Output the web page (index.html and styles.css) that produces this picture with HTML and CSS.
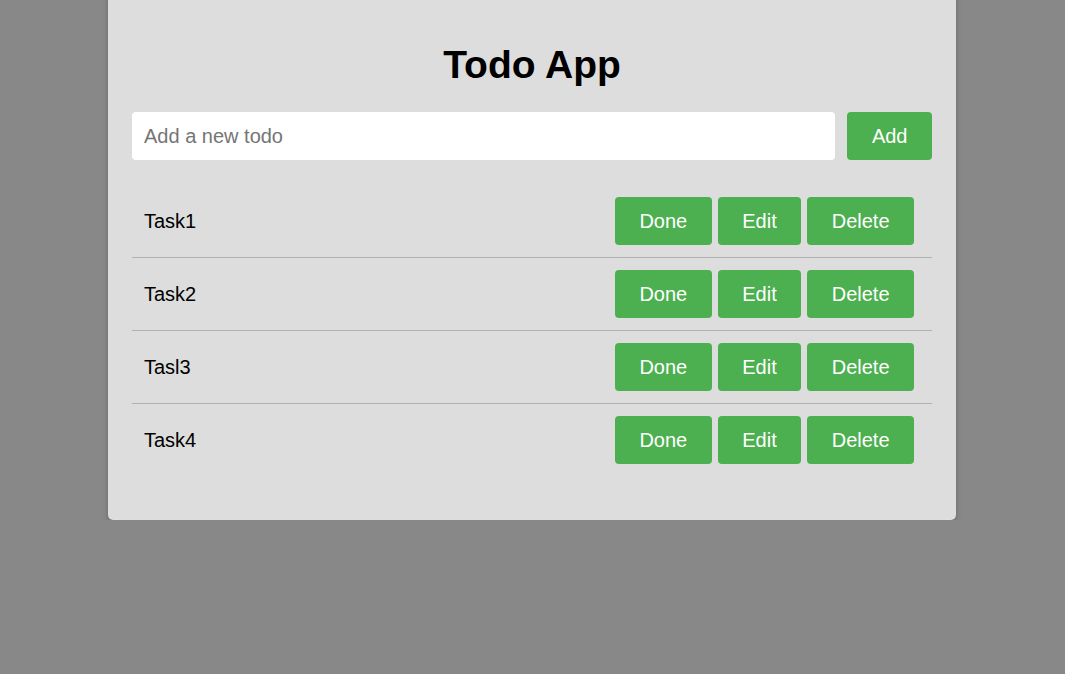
FILE: index.html
```html
<!DOCTYPE html>
<html lang="en">
<head>
  <meta charset="UTF-8">
  <meta name="viewport" content="width=device-width, initial-scale=1.0">
  <title>Todo App</title>
  <link rel="stylesheet" href="styles.css">
</head>
<body>
  <div class="container">
    <h1>Todo App</h1>
    <form class="todo-form">
      <input type="text" class="todo-input" placeholder="Add a new todo">
      <button type="submit" class="btn">Add</button>
    </form>
    <ul class="todo-list">
      <li class="todo-item">
        <span class="todo-text">Task1</span>
        <div class="actions">
          <button class="btn">Done</button>
          <button class="btn">Edit</button>
          <button class="btn">Delete</button>
        </div>
      </li>
      <li class="todo-item">
        <span class="todo-text">Task2</span>
        <div class="actions">
          <button class="btn">Done</button>
          <button class="btn">Edit</button>
          <button class="btn">Delete</button>
        </div>
      </li>
      <li class="todo-item">
        <span class="todo-text">Tasl3</span>
        <div class="actions">
          <button class="btn">Done</button>
          <button class="btn">Edit</button>
          <button class="btn">Delete</button>
        </div>
      </li>
      <li class="todo-item">
        <span class="todo-text">Task4</span>
        <div class="actions">
          <button class="btn">Done</button>
          <button class="btn">Edit</button>
          <button class="btn">Delete</button>
        </div>
      </li>
    </ul>
  </div>
</body>
</html>
```

FILE: styles.css
```css
body {
  font-family: "Liberation Sans", Arial, sans-serif;
  background: #888888;
  margin: 0;
  padding: 0 1px 0 0;
}

.container {
  max-width: 800px;
  margin: -20px auto 0;
  background-color: #dddddd;
  padding: 24px;
  border-radius: 5px;
  box-shadow: 0 2px 5px rgba(0, 0, 0, 0.25);
}

h1 {
  text-align: center;
  font-size: 39px;
  font-weight: bold;
  color: #000;
  margin: 39px 0 25px;
}

.todo-form {
  display: flex;
  gap: 12px;
  margin: 0 0 25px;
}

.todo-input {
  flex: 1;
  height: 48px;
  box-sizing: border-box;
  padding: 0 12px;
  border: none;
  border-radius: 4px;
  background: #fff;
  font-family: inherit;
  font-size: 20px;
  outline: none;
}

.todo-input::placeholder {
  color: #757575;
}

.btn {
  height: 48px;
  padding: 0 24.5px;
  background: #4caf50;
  color: #fff;
  border: none;
  border-radius: 4px;
  font-family: inherit;
  font-size: 20px;
  cursor: pointer;
}

.todo-list {
  list-style: none;
  margin: 0 0 20px;
  padding: 0;
}

.todo-item {
  display: flex;
  align-items: center;
  justify-content: space-between;
  padding: 12px;
  border-bottom: 1px solid #b0b0b0;
}

.todo-item:last-child {
  border-bottom: none;
}

.todo-text {
  font-size: 20px;
  color: #000;
}

.actions {
  display: flex;
  gap: 6px;
  margin-right: 6px;
}
```
